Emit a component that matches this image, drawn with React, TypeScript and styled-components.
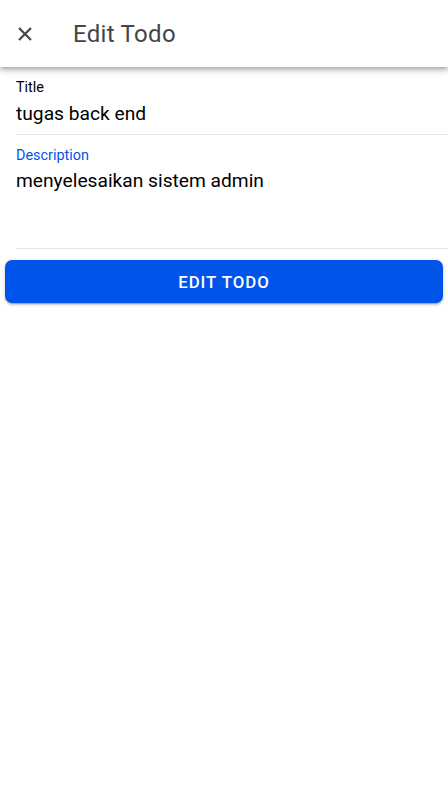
import React from "react";
import styled, { createGlobalStyle } from "styled-components";

const GlobalStyle = createGlobalStyle`
	html, body {
		margin: 0;
		padding: 0;
		background: #ffffff;
		font-family: Roboto, "Liberation Sans", sans-serif;
	}
	* {
		box-sizing: border-box;
	}
`;

const Page = styled.div`
	display: flex;
	flex-direction: column;
	min-height: 806px;
	background: #ffffff;
`;

const Header = styled.header`
	position: relative;
	z-index: 10;
	display: flex;
	align-items: center;
	height: 67px;
	padding: 0 0 0 12px;
	background: #ffffff;
	box-shadow: 0 2px 4px -1px rgba(0, 0, 0, 0.2), 0 4px 5px 0 rgba(0, 0, 0, 0.14),
		0 1px 10px 0 rgba(0, 0, 0, 0.12);
`;

const CloseButton = styled.button`
	display: flex;
	align-items: center;
	justify-content: center;
	width: 26px;
	height: 26px;
	padding: 0;
	margin: 0;
	border: none;
	background: none;
	color: #474747;
	cursor: pointer;
`;

const HeaderTitle = styled.h1`
	margin: 0 0 0 35px;
	font-size: 24px;
	font-weight: 400;
	color: #454545;
	letter-spacing: 0.3px;
`;

const Form = styled.form`
	display: flex;
	flex-direction: column;
`;

const Field = styled.div`
	padding-left: 16px;
`;

const FieldInner = styled.div<{ $minHeight: number }>`
	display: flex;
	flex-direction: column;
	min-height: ${p => p.$minHeight}px;
	padding-top: 12px;
	border-bottom: 1px solid #e6e6e6;
`;

const Label = styled.label<{ $focused?: boolean }>`
	font-size: 14.4px;
	line-height: 17px;
	color: ${p => (p.$focused ? "#0054e9" : "#000000")};
`;

const Value = styled.div<{ $gap: number }>`
	margin-top: ${p => p.$gap}px;
	font-size: 19.2px;
	line-height: 24px;
	color: #000000;
`;

const SubmitButton = styled.button`
	margin: 11px 5px 0;
	height: 43px;
	border: none;
	border-radius: 7px;
	background: #0054e9;
	color: #ffffff;
	font-family: Roboto, "Liberation Sans", sans-serif;
	font-size: 16.8px;
	font-weight: 500;
	letter-spacing: 1px;
	text-transform: uppercase;
	box-shadow: 0 3px 1px -2px rgba(0, 0, 0, 0.2), 0 2px 2px 0 rgba(0, 0, 0, 0.14),
		0 1px 5px 0 rgba(0, 0, 0, 0.12);
	cursor: pointer;
`;

const CloseIcon = () => (
	<svg width="14" height="14" viewBox="0 0 14 14">
		<path d="M1 1 L13 13 M13 1 L1 13" stroke="currentColor" strokeWidth="2.2" strokeLinecap="butt" />
	</svg>
);

const App = () => {
	return (
		<Page>
			<GlobalStyle />
			<Header>
				<CloseButton aria-label="close">
					<CloseIcon />
				</CloseButton>
				<HeaderTitle>Edit Todo</HeaderTitle>
			</Header>
			<Form onSubmit={e => e.preventDefault()}>
				<Field>
					<FieldInner $minHeight={68}>
						<Label>Title</Label>
						<Value $gap={6}>tugas back end</Value>
					</FieldInner>
				</Field>
				<Field>
					<FieldInner $minHeight={114}>
						<Label $focused>Description</Label>
						<Value $gap={5}>menyelesaikan sistem admin</Value>
					</FieldInner>
				</Field>
				<SubmitButton type="submit">Edit Todo</SubmitButton>
			</Form>
		</Page>
	);
};

export default App;
